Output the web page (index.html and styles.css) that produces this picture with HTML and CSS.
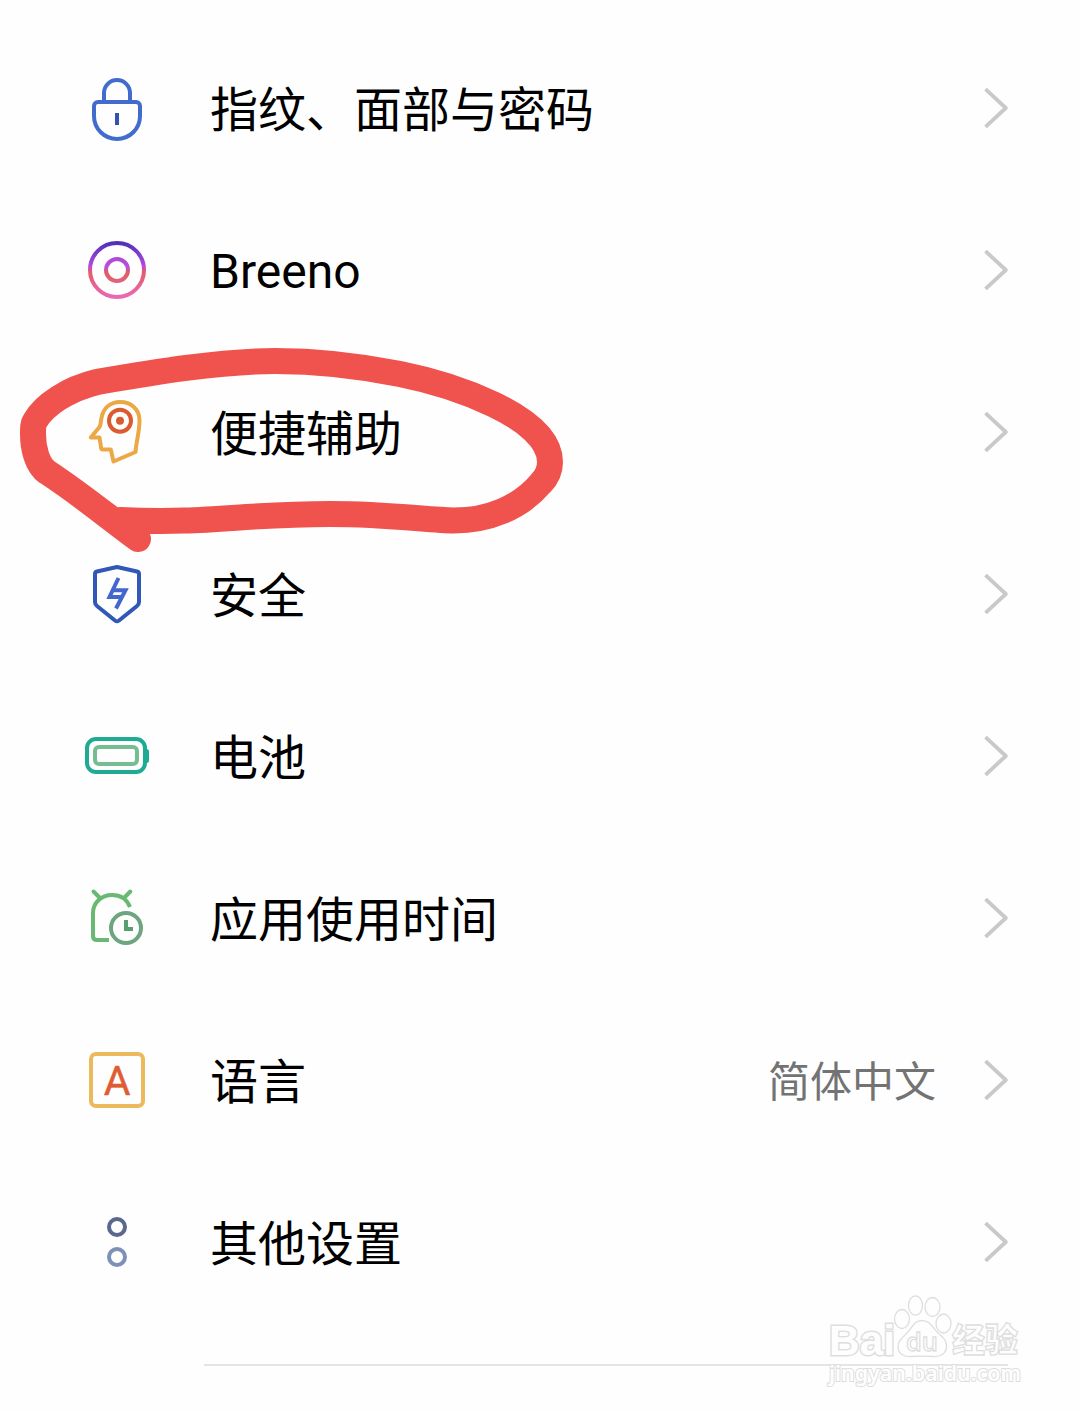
FILE: index.html
```html
<!DOCTYPE html>
<html lang="zh-CN">
    <head>
        <title>设置</title>
        <meta charset="utf-8" />
        <link rel="stylesheet" href="styles.css">
    </head>

    <body>
        <svg class="defs" width="0" height="0">
            <symbol id="chevron" viewBox="0 0 24 42">
                <path d="M1.5 2.2 L21.8 21 L1.5 39.8" fill="none" stroke="#c9c9c9" stroke-width="3.8" stroke-linejoin="round" />
            </symbol>
        </svg>

        <ul class="settings">
            <li class="row">
                <svg class="icon" viewBox="0 0 72 72" stroke="#426bce">
                    <path d="M23 30V21a13 13 0 0 1 26 0v9" />
                    <path d="M17 30H55a4 4 0 0 1 4 4v10a23 23 0 0 1-46 0V34a4 4 0 0 1 4-4z" />
                    <path d="M36 41v12" stroke="#3155ad" />
                </svg>
                <span class="label">指纹、面部与密码</span>
                <svg class="chevron"><use href="#chevron" /></svg>
            </li>
            <li class="row">
                <svg class="icon" viewBox="0 0 72 72">
                    <defs>
                        <linearGradient id="ring" x1="0" y1="0" x2="0" y2="1">
                            <stop offset="0" stop-color="#5030b8" />
                            <stop offset="0.44" stop-color="#b94be0" />
                            <stop offset="0.52" stop-color="#e25d68" />
                            <stop offset="1" stop-color="#ea68b4" />
                        </linearGradient>
                        <linearGradient id="dot" x1="0" y1="0" x2="0" y2="1">
                            <stop offset="0" stop-color="#b04ad6" />
                            <stop offset="0.42" stop-color="#bb50dc" />
                            <stop offset="0.56" stop-color="#e05c62" />
                            <stop offset="1" stop-color="#e0627a" />
                        </linearGradient>
                    </defs>
                    <circle cx="36" cy="36" r="27" stroke="url(#ring)" />
                    <circle cx="36" cy="36" r="11" stroke="url(#dot)" />
                </svg>
                <span class="label latin">Breeno</span>
                <svg class="chevron"><use href="#chevron" /></svg>
            </li>
            <li class="row">
                <svg class="icon" viewBox="0 0 72 72" stroke="#eba844">
                    <path d="M39 6C50 6 58.5 13 58.5 24.5C58.5 36 55.5 44 54.5 56L32.5 65.5L29.8 53.5H22Q20 53.5 20 51L18.5 41.5L9.8 41.5L18.5 31C20 29 19.5 26 20.5 22C22 12 29.5 6 39 6z" />
                    <circle cx="39" cy="24.7" r="11" stroke="#db5b30" />
                    <circle cx="39" cy="24.7" r="4" fill="#db5b30" stroke="none" />
                </svg>
                <span class="label">便捷辅助</span>
                <svg class="chevron"><use href="#chevron" /></svg>
            </li>
            <li class="row">
                <svg class="icon" viewBox="0 0 72 72" stroke="#3157b7">
                    <path d="M36 9L56 13.5Q58 14 58 16V44Q58 46.5 56 48L38 62.5Q36 64 34 62.5L16 48Q14 46.500 14 44V16Q14 14 16 13.5z" />
                    <path class="sharp" d="M37.5 20L28.5 39H40.5M32.5 32.2H44.5L35 50.5" stroke="#4268cf" />
                </svg>
                <span class="label">安全</span>
                <svg class="chevron"><use href="#chevron" /></svg>
            </li>
            <li class="row">
                <svg class="icon" viewBox="0 0 72 72" stroke="#1fab93">
                    <rect x="6" y="19" width="58" height="33" rx="9" />
                    <path d="M65 29h.5a2.5 2.5 0 0 1 2.5 2.5v9a2.5 2.5 0 0 1-2.5 2.5h-.5z" fill="#1fab93" stroke="none" />
                    <rect x="14" y="27" width="42" height="17" rx="4" stroke="#76bd91" />
                </svg>
                <span class="label">电池</span>
                <svg class="chevron"><use href="#chevron" /></svg>
            </li>
            <li class="row">
                <svg class="icon" viewBox="0 0 72 72" stroke="#69b873">
                    <path d="M12.5 9.5L18.5 15.5M49.3 9.5L43.5 15.5" stroke-linecap="round" />
                    <path d="M49 25C46 17.5 39.5 13 31 13C20 13 12 21 12 31V54Q12 58 16 58H28" />
                    <circle cx="45" cy="46" r="15" stroke="#6ca580" />
                    <path class="sharp" d="M45 38V47H52" stroke="#5b9e72" />
                </svg>
                <span class="label">应用使用时间</span>
                <svg class="chevron"><use href="#chevron" /></svg>
            </li>
            <li class="row">
                <svg class="icon" viewBox="0 0 72 72" stroke="#ecba5c">
                    <rect x="10" y="10" width="52" height="52" rx="5" />
                    <text class="letter" x="36" y="50.5" text-anchor="middle">A</text>
                </svg>
                <span class="label">语言</span>
                <span class="value">简体中文</span>
                <svg class="chevron"><use href="#chevron" /></svg>
            </li>
            <li class="row">
                <svg class="icon" viewBox="0 0 72 72">
                    <circle cx="36" cy="21" r="8" stroke="#5a688f" />
                    <circle cx="36" cy="51" r="8" stroke="#7d91b8" />
                </svg>
                <span class="label">其他设置</span>
                <svg class="chevron"><use href="#chevron" /></svg>
            </li>
        </ul>
        <hr class="divider" />

        <!-- hand-drawn marker around the third row -->
        <svg class="marker" viewBox="0 0 580 240">
            <path d="M138 209C108 187 82 165 47 142C37 135 33 118 33 104C33 98 33 94 35 91C44 75 68 59 97 52C150 43 220 31 275 31C320 31 365 37 400 44C450 54 550 86 550 132C550 141 547 147 541 153C520 178 488 190.5 454 190.5C430 190.500 390 184 330 184C240 184 210 194 120 190" />
        </svg>

        <svg class="watermark" viewBox="0 0 220 110">
            <text class="bai" x="18" y="64" font-size="43" textLength="66" lengthAdjust="spacingAndGlyphs">Bai</text>
            <ellipse cx="91" cy="28" rx="7.5" ry="9.5" />
            <ellipse cx="104.500" cy="14.5" rx="7" ry="9.7" />
            <ellipse cx="121.500" cy="16" rx="7.5" ry="9.5" />
            <ellipse cx="132.500" cy="32.5" rx="7.5" ry="9.5" />
            <path d="M111 29.5C119 29.5 122 37 127 42C133 47 136 50 135.5 56C135 63 129 66 122 65.5C116 65 107 65 100 65.5C92 66 87 62 87 56C87 50 91 47 96 42C101 37 103 29.5 111 29.5z" />
            <text x="95" y="60" font-size="26" textLength="32" lengthAdjust="spacingAndGlyphs">du</text>
            <text class="cjk" x="141" y="61" font-size="33">经验</text>
            <text class="url" x="18" y="90" font-size="21" textLength="192" lengthAdjust="spacingAndGlyphs">jingyan.baidu.com</text>
        </svg>
    </body>
</html>
```
FILE: styles.css
```css
body {
    background-color: #fefefe;
    margin: 0;
    padding: 27px 0 0;
    position: relative;
    width: 1080px;
    height: 1384px;
    overflow: hidden;
    font-family: Roboto, "Noto Sans CJK SC", sans-serif;
    color: #000;
}

.defs {
    display: block;
}

.settings {
    list-style: none;
    margin: 0;
    padding: 0;
}

.row {
    display: flex;
    align-items: center;
    height: 162px;
    padding: 0 72px 0 81px;
}

.icon {
    width: 72px;
    height: 72px;
    margin-right: 57px;
    fill: none;
    stroke-width: 4;
    stroke-linejoin: round;
}

.sharp {
    stroke-linejoin: miter;
}

.letter {
    font-family: Roboto, sans-serif;
    font-size: 41px;
    fill: #e05c31;
    stroke: #e05c31;
    stroke-width: 0.5;
}

.label {
    flex: 1;
    padding-top: 6px;
    font-size: 48px;
    line-height: 72px;
}

.latin {
    padding-top: 4px;
}

.value {
    padding-top: 6px;
    font-size: 42px;
    line-height: 64px;
    color: #737373;
    margin-right: 48px;
}

.chevron {
    width: 24px;
    height: 42px;
}

.divider {
    height: 2px;
    margin: 41px 72px 0 204px;
    border: 0;
    background-color: #e5e5e5;
}

.marker {
    position: absolute;
    left: 0;
    top: 330px;
    width: 580px;
    height: 240px;
    fill: none;
    stroke: #f0534d;
    stroke-width: 26;
    stroke-linecap: round;
    stroke-linejoin: round;
}

.watermark {
    position: absolute;
    left: 811px;
    top: 1291px;
    width: 220px;
    height: 110px;
    font-family: "Open Sans", sans-serif;
    font-weight: 600;
    fill: #fefefe;
    stroke: #dedede;
    stroke-width: 1.3;
}

.bai {
    font-family: "Liberation Sans", sans-serif;
    font-weight: bold;
    stroke-width: 3;
    paint-order: stroke;
}

.cjk {
    font-family: "Noto Sans CJK SC", sans-serif;
    font-weight: 900;
}

.url {
    font-family: "Noto Sans", sans-serif;
    stroke-width: 2;
    paint-order: stroke;
}
```
